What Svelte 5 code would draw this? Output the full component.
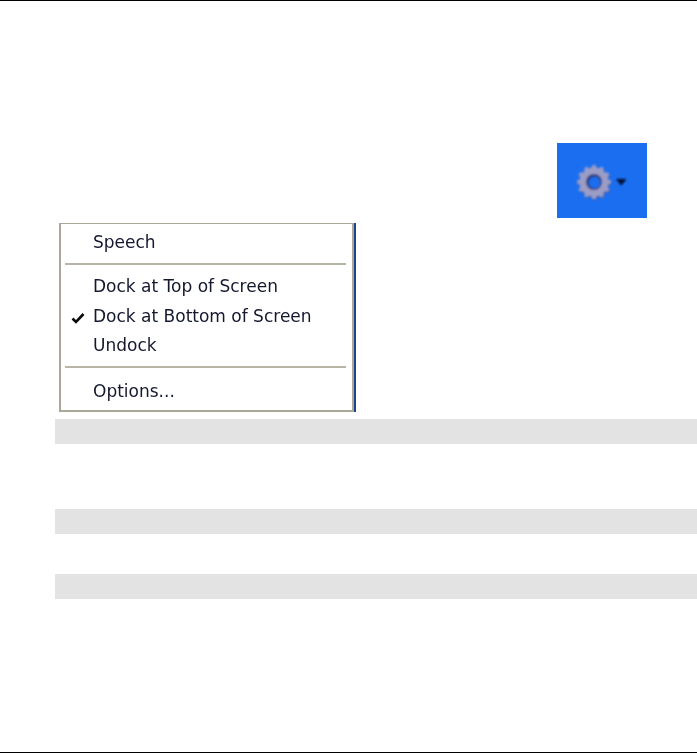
<script>
    const menuGroups = [
        [{ label: "Speech" }],
        [
            { label: "Dock at Top of Screen" },
            { label: "Dock at Bottom of Screen", checked: true },
            { label: "Undock" }
        ],
        [{ label: "Options..." }]
    ];

    // gear outline with 12 teeth
    function gearPath(cx, cy, outer, inner, teeth) {
        let d = "";
        const step = (Math.PI * 2) / teeth;
        for (let i = 0; i < teeth; i++) {
            const a = i * step;
            const pts = [
                [inner, a - step * 0.5],
                [inner, a - step * 0.28],
                [outer, a - step * 0.2],
                [outer, a + step * 0.2],
                [inner, a + step * 0.28]
            ];
            for (const [r, t] of pts) {
                const x = (cx + r * Math.cos(t)).toFixed(2);
                const y = (cy + r * Math.sin(t)).toFixed(2);
                d += (d ? "L" : "M") + x + " " + y;
            }
        }
        return d + "Z";
    }

    const gear = gearPath(20, 20, 17, 14.6, 12);
</script>

<div class="page">
    <div class="toolbar">
        <div class="button">
            <svg width="54" height="42" viewBox="0 0 54 42">
                <defs>
                    <filter id="soft" x="-10%" y="-10%" width="120%" height="120%">
                        <feGaussianBlur stdDeviation="0.8" />
                    </filter>
                </defs>
                <g filter="url(#soft)">
                    <path d={gear} transform="translate(0.5 1)" fill="#4a5490" />
                    <path d={gear} fill="#9c9dc6" />
                    <circle cx="20" cy="20" r="8" fill="#2c3d7c" />
                    <circle cx="20.6" cy="20.6" r="5.8" fill="#1b6ef0" />
                    <path d="M42 17h10.5l-5.25 6.4z" fill="#04082a" />
                </g>
            </svg>
        </div>
    </div>

    <div class="menu">
        {#each menuGroups as group, g}
            {#if g > 0}
                <div class="sep"></div>
            {/if}
            <div class="group">
                {#each group as item}
                    <div class="item">
                        {#if item.checked}
                            <svg class="check" width="14" height="12" viewBox="0 0 14 12">
                                <path d="M1.5 6.5 L5 10 L12.5 2" fill="none" stroke="#0a0a0a" stroke-width="2.6" />
                            </svg>
                        {/if}
                        {item.label}
                    </div>
                {/each}
            </div>
        {/each}
    </div>

    <div class="bar first"></div>
    <div class="bar second"></div>
    <div class="bar third"></div>
</div>

<style>
    :global(body) {
        margin: 0;
        background: #fff;
    }

    .page {
        height: 753px;
        box-sizing: border-box;
        border-top: 1px solid #000;
        border-bottom: 1px solid #000;
        padding-bottom: 1px;
        display: flex;
        flex-direction: column;
        overflow: hidden;
    }

    .toolbar {
        display: flex;
        justify-content: flex-end;
        padding: 142px 50px 0 0;
    }

    .button {
        width: 90px;
        height: 75px;
        background: #1b6ef0;
        display: flex;
        align-items: center;
        padding: 5px 0 0 17px;
        box-sizing: border-box;
    }

    .menu {
        width: 295px;
        height: 189px;
        margin: 5px 0 0 59px;
        box-sizing: border-box;
        background: #fff;
        border: 2px solid #aca899;
        border-top-width: 1px;
        box-shadow: 2px 0 0 #1c4590;
        padding-top: 3px;
        font-family: "DejaVu Sans", sans-serif;
        font-size: 17px;
        color: #14182f;
    }

    .group {
        display: flex;
        flex-direction: column;
        filter: blur(0.3px);
    }

    .item {
        position: relative;
        height: 29.5px;
        line-height: 29.5px;
        padding-left: 32px;
        white-space: nowrap;
    }

    .group:first-child .item {
        height: 30px;
        line-height: 30px;
    }

    .group:last-child .item {
        height: 31px;
        line-height: 31px;
    }

    .check {
        position: absolute;
        left: 10px;
        top: 10px;
    }

    .sep {
        height: 2px;
        background: #b8b5a6;
        margin: 5.5px 6px 7.5px 4px;
    }

    .bar {
        height: 25px;
        margin-left: 55px;
        background: #e3e3e3;
        flex-shrink: 0;
    }

    .first {
        margin-top: 7px;
    }

    .second {
        margin-top: 65px;
    }

    .third {
        margin-top: 40px;
    }
</style>
